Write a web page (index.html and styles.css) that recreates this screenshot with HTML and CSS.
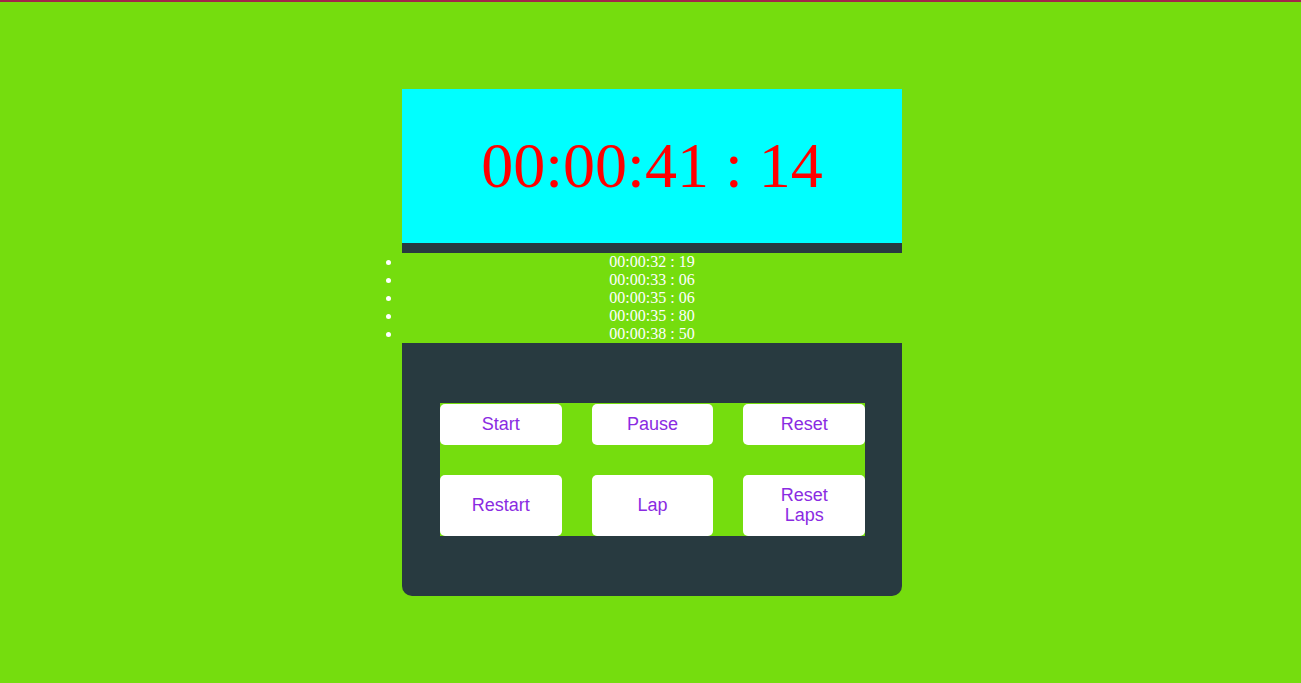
FILE: index.html
```html
<!DOCTYPE html>
<html>
<head>
<meta charset="utf-8">
<title>Stopwatch</title>
<link rel="stylesheet" href="styles.css">
</head>
<body>
<div class="stopwatch">
  <div class="display">00:00:41 : 14</div>
  <ul class="laps">
    <li>00:00:32 : 19</li>
    <li>00:00:33 : 06</li>
    <li>00:00:35 : 06</li>
    <li>00:00:35 : 80</li>
    <li>00:00:38 : 50</li>
  </ul>
  <div class="controls">
    <div class="grid">
      <button class="btn">Start</button>
      <button class="btn">Pause</button>
      <button class="btn">Reset</button>
      <button class="btn">Restart</button>
      <button class="btn">Lap</button>
      <button class="btn">Reset Laps</button>
    </div>
  </div>
</div>
</body>
</html>
```

FILE: styles.css
```css
html, body {
  margin: 0;
  padding: 0;
}
body {
  background: #75dd0e;
  border-top: 2px solid #a3264a;
  min-height: 681px;
  padding-left: 3px;
  font-family: "Liberation Serif", serif;
}
.stopwatch {
  width: 500px;
  margin: 87px auto 0;
}
.display {
  height: 154px;
  background: #00ffff;
  border-bottom: 10px solid #283a40;
  display: flex;
  align-items: center;
  justify-content: center;
  color: #ff0000;
  font-family: "Liberation Serif", serif;
  font-size: 64px;
}
.laps {
  margin: 0;
  padding: 0;
  color: #ffffff;
  font-size: 16px;
  line-height: 18px;
  text-align: center;
}
.controls {
  background: #283a40;
  padding: 60px 37px 60px 38px;
  border-radius: 0 0 10px 10px;
}
.grid {
  display: grid;
  grid-template-columns: repeat(3, 1fr);
  gap: 30px;
  background: #75dd0e;
  padding-top: 1px;
}
.btn {
  background: #ffffff;
  border: none;
  border-radius: 5px;
  padding: 10px 20px;
  color: #8a2be2;
  font-family: "Liberation Sans", Arial, sans-serif;
  font-size: 18px;
  line-height: 20.5px;
}
```
